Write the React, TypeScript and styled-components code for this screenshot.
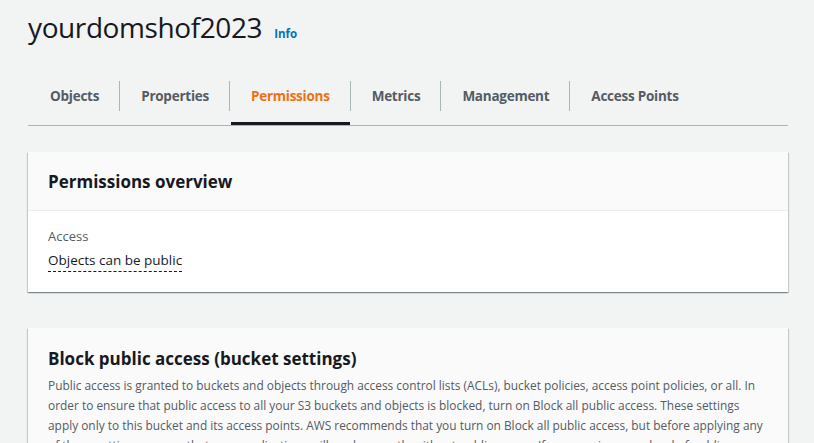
import React from 'react';
import styled, { createGlobalStyle } from 'styled-components';

const GlobalStyle = createGlobalStyle`
  html, body {
    margin: 0;
    padding: 0;
    background: #f2f3f3;
  }
  body {
    font-family: "Open Sans", "Noto Sans", sans-serif;
    color: #16191f;
  }
`;

const tabs = ['Objects', 'Properties', 'Permissions', 'Metrics', 'Management', 'Access Points'];
const activeTab = 'Permissions';

const StyledPage = styled.div`
  padding: 0 26px 0 28px;
  overflow: hidden;
  height: 443px;
`;

const StyledHeader = styled.div`
  display: flex;
  align-items: baseline;
  gap: 12px;
  padding-top: 7px;
  height: 74px;
  box-sizing: border-box;
`;

const StyledTitle = styled.h1`
  margin: 0;
  font-weight: 400;
  font-size: 28px;
  line-height: 40px;
  color: #16191f;
  letter-spacing: -0.4px;
`;

const StyledInfo = styled.a`
  font-size: 11.5px;
  font-weight: 700;
  color: #0073bb;
  text-decoration: none;
`;

const StyledTabList = styled.div`
  display: flex;
  border-bottom: 1px solid #aab7b8;
  margin-top: 7px;
`;

const StyledTab = styled.div<{ $active: boolean }>`
  position: relative;
  padding-bottom: 14px;

  &::after {
    content: '';
    display: ${({ $active }) => ($active ? 'block' : 'none')};
    position: absolute;
    left: 2px;
    right: 0;
    bottom: 0;
    height: 3px;
    background: #16191f;
  }
`;

const StyledTabLabel = styled.span<{ $active: boolean; $first: boolean }>`
  display: flex;
  align-items: center;
  height: 30px;
  padding: 0 20px 0 ${({ $first }) => ($first ? '22px' : '21px')};
  border-left: ${({ $first }) => ($first ? 'none' : '1px solid #aab7b8')};
  font-size: 13.5px;
  font-weight: 700;
  letter-spacing: -0.25px;
  color: ${({ $active }) => ($active ? '#ec7211' : '#545b64')};
`;

const StyledCard = styled.section<{ $gap: number }>`
  margin-top: ${({ $gap }) => $gap}px;
  background: #ffffff;
  box-shadow: 0 1px 1px 0 rgba(0, 28, 36, 0.3), 1px 1px 1px 0 rgba(0, 28, 36, 0.15),
    -1px 1px 1px 0 rgba(0, 28, 36, 0.15);
`;

const StyledCardHeader = styled.div<{ $divider: boolean }>`
  background: #fafafa;
  padding: ${({ $divider }) => ($divider ? '18px 20px 16px' : '19px 20px 12px')};
  border-bottom: ${({ $divider }) => ($divider ? '1px solid #eaeded' : 'none')};
`;

const StyledCardTitle = styled.h2`
  margin: 0;
  font-weight: 700;
  font-size: 17px;
  line-height: 24px;
  color: #16191f;
`;

const StyledDescription = styled.p`
  margin: 4px 0 0;
  font-size: 11.9px;
  line-height: 20px;
  color: #545b64;
`;

const StyledCardBody = styled.div`
  padding: 14px 20px 20px;
`;

const StyledLabel = styled.div`
  font-size: 13px;
  line-height: 22px;
  color: #545b64;
`;

const StyledValue = styled.span`
  display: inline-block;
  margin-top: 3px;
  font-size: 13.5px;
  line-height: 21px;
  color: #16191f;
  border-bottom: 1px dashed #16191f;
`;

const App: React.FC = () => (
  <>
    <GlobalStyle />
    <StyledPage>
      <StyledHeader>
        <StyledTitle>yourdomshof2023</StyledTitle>
        <StyledInfo href="#">Info</StyledInfo>
      </StyledHeader>

      <StyledTabList>
        {tabs.map((t, i) => (
          <StyledTab key={t} $active={t === activeTab}>
            <StyledTabLabel $active={t === activeTab} $first={i === 0}>
              {t}
            </StyledTabLabel>
          </StyledTab>
        ))}
      </StyledTabList>

      <StyledCard $gap={26}>
        <StyledCardHeader $divider>
          <StyledCardTitle>Permissions overview</StyledCardTitle>
        </StyledCardHeader>
        <StyledCardBody>
          <StyledLabel>Access</StyledLabel>
          <StyledValue>Objects can be public</StyledValue>
        </StyledCardBody>
      </StyledCard>

      <StyledCard $gap={36}>
        <StyledCardHeader $divider={false}>
          <StyledCardTitle>Block public access (bucket settings)</StyledCardTitle>
          <StyledDescription>
            Public access is granted to buckets and objects through access control lists (ACLs),
            bucket policies, access point policies, or all. In order to ensure that public access
            to all your S3 buckets and objects is blocked, turn on Block all public access. These
            settings apply only to this bucket and its access points. AWS recommends that you turn
            on Block all public access, but before applying any of these settings, ensure that your
            applications will work correctly without public access. If you require some level of
            public access to your buckets or objects within, you can customize the individual
            settings below to suit your specific storage use cases.
          </StyledDescription>
        </StyledCardHeader>
      </StyledCard>
    </StyledPage>
  </>
);

export default App;
